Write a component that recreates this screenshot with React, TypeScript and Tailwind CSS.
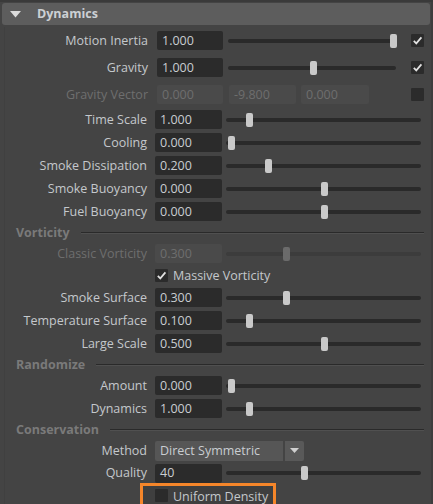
import React from "react";

const FONT = { fontFamily: '"Open Sans", "Liberation Sans", Arial, sans-serif' };

function Check({ checked }: { checked: boolean }) {
  return (
    <div className="w-[13px] h-[13px] rounded-[1px] bg-[#2b2b2b] flex items-center justify-center shrink-0">
      {checked && (
        <svg width="11" height="11" viewBox="0 0 11 11">
          <polyline points="1.8,5.8 4.3,8.4 9.4,2.4" fill="none" stroke="#e2e2e2" strokeWidth="1.7" />
        </svg>
      )}
    </div>
  );
}

function Slider({ width, thumb, dim }: { width: number; thumb: number; dim?: boolean }) {
  return (
    <div
      className={`relative h-[4px] rounded-full shrink-0 ${dim ? "bg-[#3c3c3c]" : "bg-[#2a2a2a]"}`}
      style={{ width }}
    >
      <div
        className={`absolute top-1/2 -translate-y-1/2 w-[7px] h-[14px] rounded-[2px] ${dim ? "bg-[#6b6b6b]" : "bg-[#c9c9c9]"}`}
        style={{ left: thumb }}
      />
    </div>
  );
}

function Field({ value, w, dim }: { value: string; w: number; dim?: boolean }) {
  return (
    <div
      className={`h-[19px] rounded-[2px] flex items-center pl-[5px] pt-[1px] shrink-0 ${dim ? "bg-[#4a4a4a] text-[#6e6e6e]" : "bg-[#2b2b2b] text-[#c9cdd1]"}`}
      style={{ width: w }}
    >
      {value}
    </div>
  );
}

function TopRow({ label, value, thumb, checked }: { label: string; value: string; thumb: number; checked: boolean }) {
  return (
    <div className="h-[27px] flex items-center">
      <div className="w-[148px] text-right text-[#c4c8cc] pt-[1px] whitespace-nowrap">{label}</div>
      <div className="ml-[9px]"><Field value={value} w={66} /></div>
      <div className="ml-[5px]"><Slider width={168} thumb={thumb} /></div>
      <div className="ml-[15px]"><Check checked={checked} /></div>
    </div>
  );
}

function Row({ label, value, thumb, dim }: { label: string; value: string; thumb: number; dim?: boolean }) {
  return (
    <div className="h-[23px] flex items-center">
      <div className={`w-[147px] text-right pt-[1px] whitespace-nowrap ${dim ? "text-[#6e6e6e]" : "text-[#c4c8cc]"}`}>{label}</div>
      <div className="ml-[8px]"><Field value={value} w={67} dim={dim} /></div>
      <div className="ml-[4px]"><Slider width={195} thumb={thumb - 226} dim={dim} /></div>
    </div>
  );
}

function Section({ title }: { title: string }) {
  return (
    <div className="h-[19px] flex items-center pl-[16px]">
      <div className="font-bold text-[#7a7a7a] pt-[1px]">{title}</div>
      <div className="flex-1 mr-[9px] ml-[11px] flex flex-col">
        <div className="h-[1px] bg-[#2a2a2a]" />
        <div className="h-[1px] bg-[#505050]" />
      </div>
    </div>
  );
}

export default function App() {
  return (
    <div
      className="w-[433px] h-[504px] overflow-hidden bg-[#444444] text-[12.5px] leading-none border-t-[2px] border-[#3a3a3a] relative"
      style={FONT}
    >
      <div className="absolute left-[4px] top-[25px] bottom-0 w-[1px] bg-[#404040]" />
      <div className="absolute right-0 top-0 bottom-0 w-[2px] bg-[#3d3d3d]" />
      <div className="ml-[2px] mr-[3px] mt-[1px] h-[22px] rounded-[3px] bg-[#5d5d5d] flex items-center">
        <svg width="11" height="7" viewBox="0 0 11 7" className="ml-[8px]">
          <polygon points="0,0 11,0 5.5,6.5" fill="#dcdcdc" />
        </svg>
        <div className="ml-[16px] font-bold text-[#ccd0d4] pt-[1px]">Dynamics</div>
      </div>
      <div className="mt-[2px]">
        <TopRow label="Motion Inertia" value="1.000" thumb={162} checked />
        <TopRow label="Gravity" value="1.000" thumb={82} checked />
        <div className="h-[27px] flex items-center">
          <div className="w-[148px] text-right text-[#6e6e6e] pt-[1px] whitespace-nowrap">Gravity Vector</div>
          <div className="ml-[9px]"><Field value="0.000" w={66} dim /></div>
          <div className="ml-[6px]"><Field value="-9.800" w={67} dim /></div>
          <div className="ml-[5px]"><Field value="0.000" w={68} dim /></div>
          <div className="ml-[42px]"><Check checked={false} /></div>
        </div>
        <Row label="Time Scale" value="1.000" thumb={246} />
        <Row label="Cooling" value="0.000" thumb={228} />
        <Row label="Smoke Dissipation" value="0.200" thumb={265} />
        <Row label="Smoke Buoyancy" value="0.000" thumb={321} />
        <Row label="Fuel Buoyancy" value="0.000" thumb={321} />
        <Section title="Vorticity" />
        <Row label="Classic Vorticity" value="0.300" thumb={283} dim />
        <div className="h-[21px] flex items-center pl-[155px]">
          <Check checked />
          <div className="ml-[5px] text-[#c4c8cc] pt-[1px]">Massive Vorticity</div>
        </div>
        <Row label="Smoke Surface" value="0.300" thumb={283} />
        <Row label="Temperature Surface" value="0.100" thumb={246} />
        <Row label="Large Scale" value="0.500" thumb={321} />
        <Section title="Randomize" />
        <Row label="Amount" value="0.000" thumb={228} />
        <Row label="Dynamics" value="1.000" thumb={246} />
        <Section title="Conservation" />
        <div className="h-[23px] flex items-center">
          <div className="w-[147px] text-right text-[#c4c8cc] pt-[1px]">Method</div>
          <div className="ml-[8px] flex h-[20px]">
            <div className="w-[128px] bg-[#565656] rounded-l-[2px] flex items-center pl-[5px] pt-[1px] text-[#c9cdd1] whitespace-nowrap">
              Direct Symmetric
            </div>
            <div className="ml-[2px] w-[19px] bg-[#595959] rounded-r-[2px] flex items-center justify-center">
              <svg width="9" height="5" viewBox="0 0 9 5">
                <polygon points="0,0 9,0 4.5,5" fill="#cfcfcf" />
              </svg>
            </div>
          </div>
        </div>
        <div className="h-[22px] flex items-center">
          <div className="w-[147px] text-right text-[#c4c8cc] pt-[1px]">Quality</div>
          <div className="ml-[8px]"><Field value="40" w={67} /></div>
          <div className="ml-[4px]"><Slider width={195} thumb={301 - 226} /></div>
        </div>
        <div className="-mt-[1px] pl-[140px] flex">
          <div className="border-[3px] border-[#f5862a] bg-[#3f3f3f] h-[26px] flex items-start pt-[3px] pl-[12px] pr-[5px]">
            <Check checked={false} />
            <div className="ml-[5px] text-[#c4c8cc] leading-[13px] pt-[1px] whitespace-nowrap">Uniform Density</div>
          </div>
        </div>
      </div>
    </div>
  );
}
